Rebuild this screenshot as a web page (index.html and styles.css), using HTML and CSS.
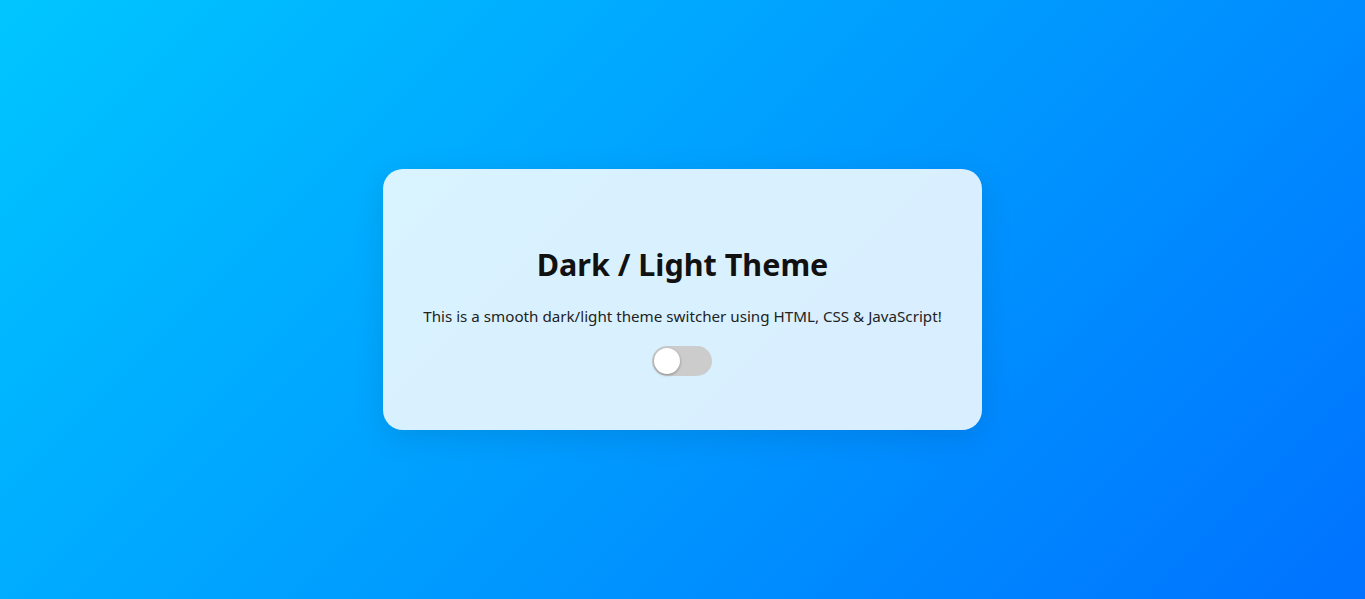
FILE: index.html
```html
<!DOCTYPE html>
<html lang="en">
<head>
<meta charset="utf-8">
<title>Dark / Light Theme</title>
<link rel="stylesheet" href="styles.css">
</head>
<body>
<main class="page">
  <div class="card">
    <h2 class="title">Dark / Light Theme</h2>
    <p class="text">This is a smooth dark/light theme switcher using HTML, CSS &amp; JavaScript!</p>
    <label class="switch">
      <input type="checkbox" class="switch-input">
      <span class="slider"></span>
    </label>
  </div>
</main>
</body>
</html>
```
FILE: styles.css
```css
* { box-sizing: border-box; }
html, body { margin: 0; height: 100%; }
body {
  font-family: "Noto Sans", "Open Sans", sans-serif;
  background: linear-gradient(135deg, #00c6ff, #0072ff);
  min-height: 100vh;
}
.page {
  height: 100vh;
  display: flex;
  align-items: center;
  justify-content: center;
}
.card {
  background: rgba(255, 255, 255, 0.85);
  border-radius: 20px;
  padding: 50px 40px 54px;
  text-align: center;
  box-shadow: 0 8px 32px rgba(0, 0, 0, 0.1);
  display: flex;
  flex-direction: column;
  align-items: center;
}
.title {
  margin: 25px 0 0;
  font-size: 30.5px;
  line-height: 40px;
  font-weight: 700;
  color: #111;
}
.text {
  margin: 21px 0 0;
  font-size: 15.18px;
  line-height: 22px;
  color: #222;
}
.switch {
  margin-top: 19px;
  position: relative;
  width: 60px;
  height: 30px;
  display: inline-block;
}
.switch-input { display: none; }
.slider {
  position: absolute;
  inset: 0;
  background: #ccc;
  border-radius: 30px;
}
.slider::before {
  content: "";
  position: absolute;
  left: 2px;
  top: 2px;
  width: 26px;
  height: 26px;
  border-radius: 50%;
  background: #fff;
  box-shadow: 0 1px 3px rgba(0, 0, 0, 0.35);
}
```
